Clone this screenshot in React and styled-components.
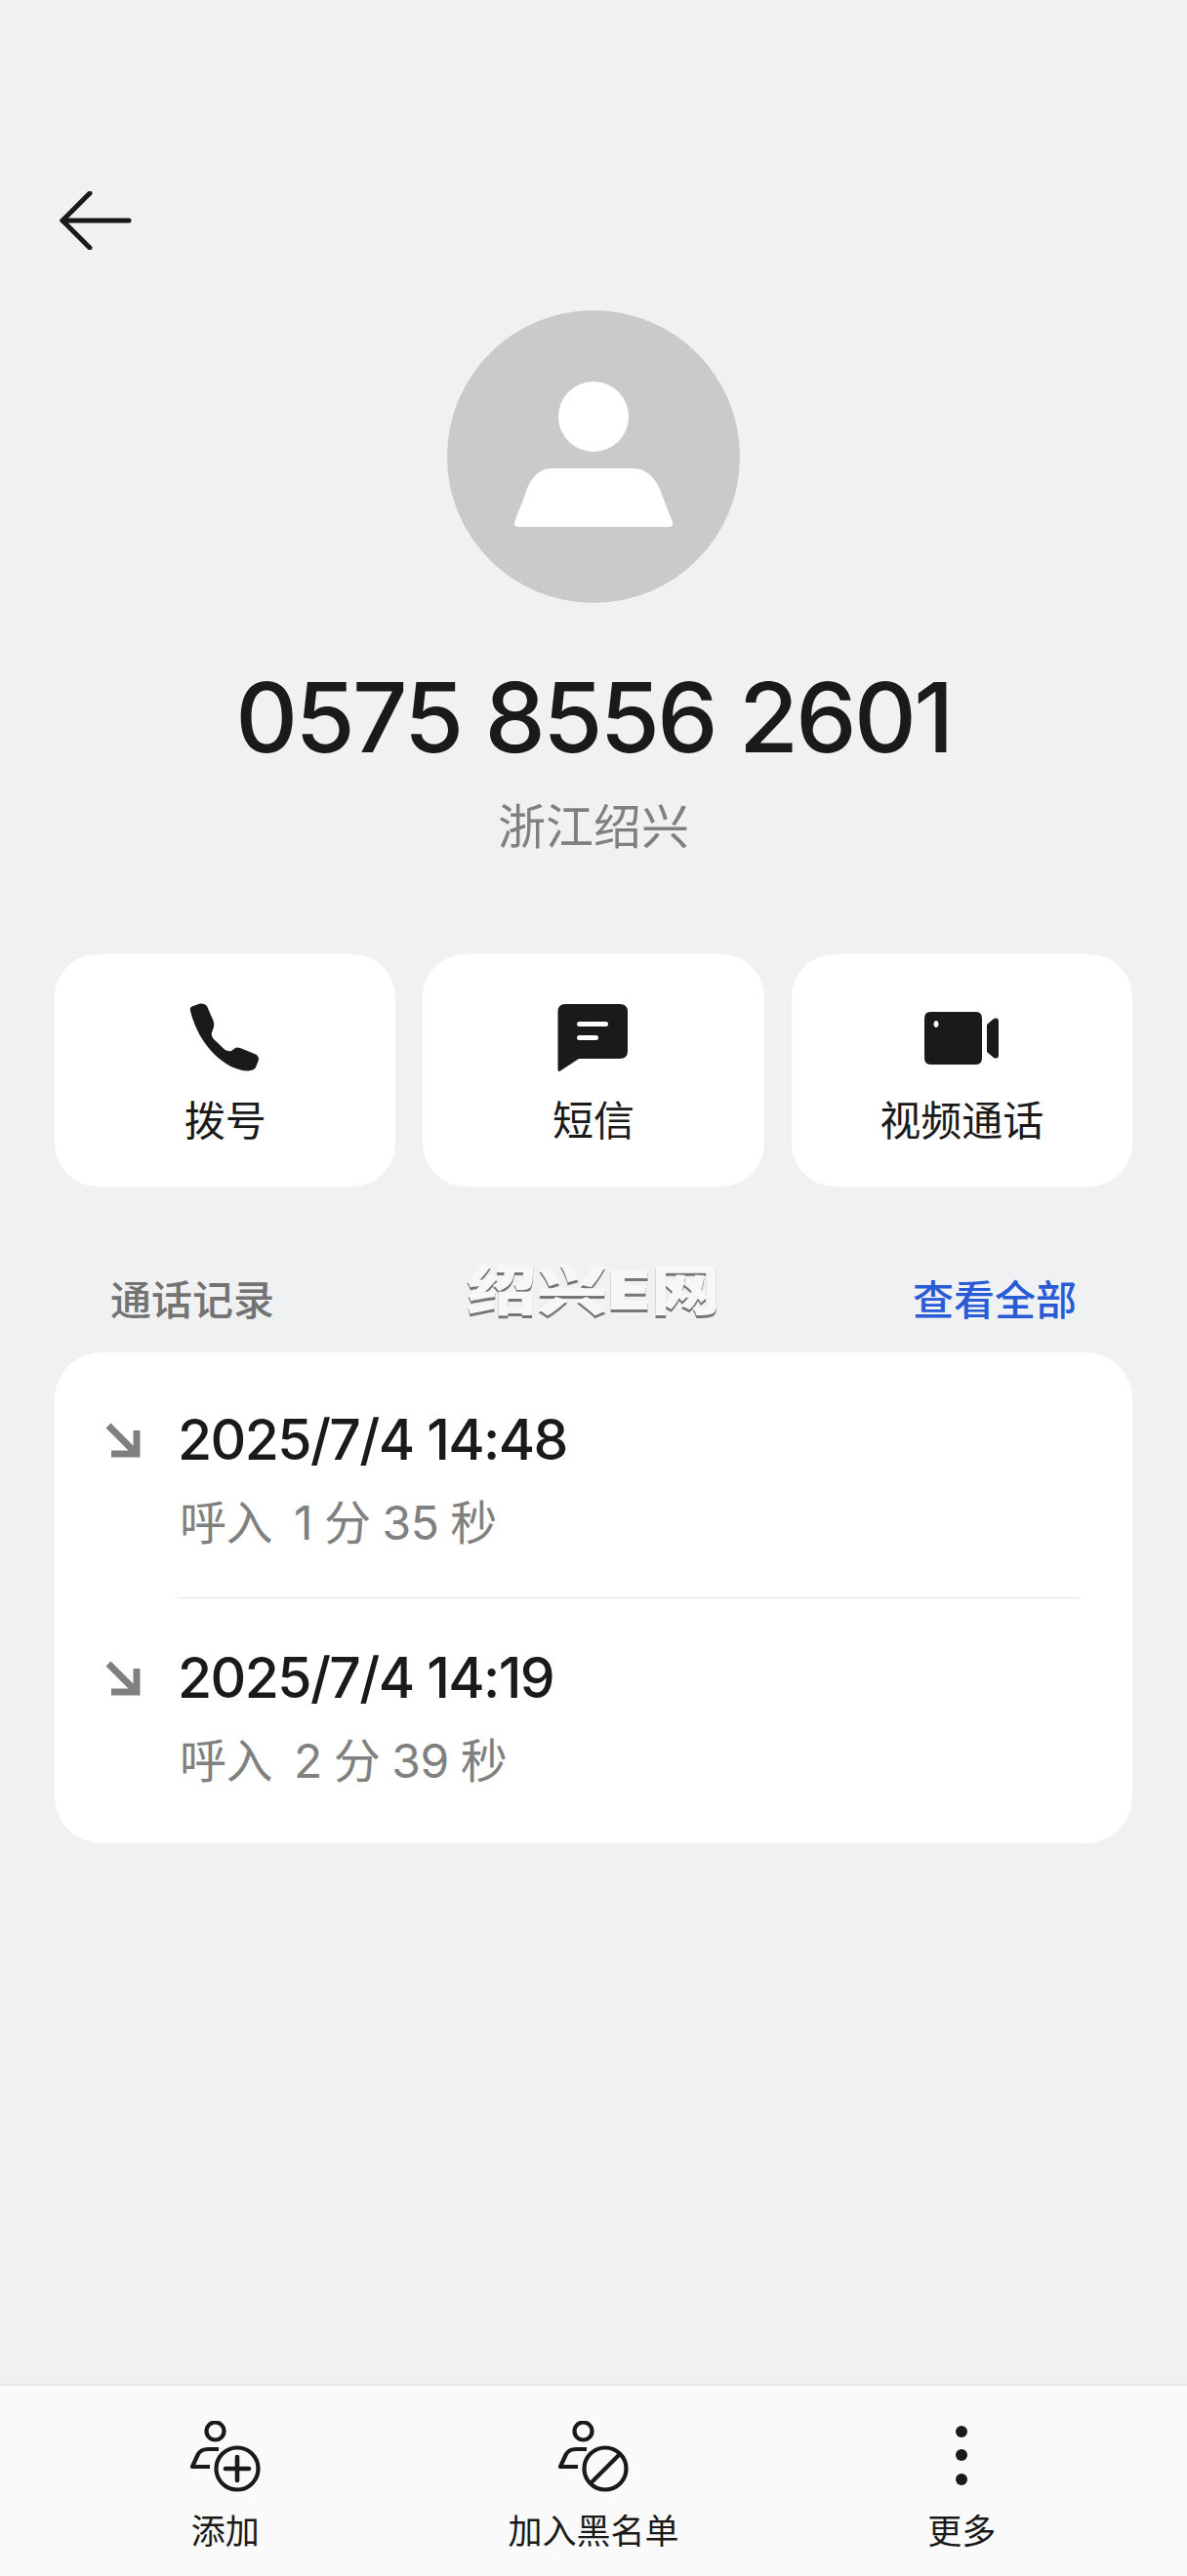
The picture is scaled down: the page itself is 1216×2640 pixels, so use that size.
import React from 'react';
import styled, { createGlobalStyle } from 'styled-components';

const GlobalStyle = createGlobalStyle`
  html, body {
    margin: 0;
    padding: 0;
    background: #f0f1f3;
    font-family: Inter, "Noto Sans CJK SC", sans-serif;
    color: #1a1a1a;
  }
`

const ACTIONS = [
  { label: '拨号', icon: <PhoneIcon /> },
  { label: '短信', icon: <MessageIcon /> },
  { label: '视频通话', icon: <VideoIcon /> },
]

const CALLS = [
  { time: '2025/7/4 14:48', type: '呼入', duration: '1 分 35 秒' },
  { time: '2025/7/4 14:19', type: '呼入', duration: '2 分 39 秒' },
]

const TOOLS = [
  { label: '添加', icon: <AddContactIcon /> },
  { label: '加入黑名单', icon: <BlockContactIcon /> },
  { label: '更多', icon: <MoreIcon /> },
]

function BackIcon() {
  return (
    <svg width="74" height="60" viewBox="0 0 74 60" fill="none" stroke="#1a1a1a" strokeWidth="5" strokeLinecap="round" strokeLinejoin="round">
      <path d="M31 2 L3 30 L31 58" />
      <path d="M3 30 H71" />
    </svg>
  )
}

function AvatarIcon() {
  return (
    <svg width="300" height="300" viewBox="0 0 300 300" fill="#fff">
      <circle cx="150" cy="109" r="36" />
      <path d="M108 162 H190 C206 162 216 175 220 189 L231 217 Q232 222 227 222 H73 Q68 222 69 217 L80 189 C84 175 92 162 108 162 Z" />
    </svg>
  )
}

function PhoneIcon() {
  return (
    <svg width="74" height="72" viewBox="0 0 74 72" fill="#1a1a1a">
      <path d="M1 8 Q0 4 4 3 L11 0.5 Q16 0 18 3 L24.5 18 Q26 22 24.5 26 L23 30 Q22 33 24.5 36.5 L36 47.5 Q39 50 43 49 L47 46 Q49 45 52 46 L68 52.5 Q71 54 71 58 L68 66 Q66 69 60 69.5 C38 69 10 45 1 8 Z" />
    </svg>
  )
}

function MessageIcon() {
  return (
    <svg width="74" height="70" viewBox="0 0 74 70" fill="#1a1a1a">
      <path fillRule="evenodd" d="M8 0 H64 Q72 0 72 8 V48 Q72 56 64 56 H22 L3 68.5 Q0.5 70 0.5 67 V8 Q0.5 0 8 0 Z M22.5 18 Q20 18 20 20.5 Q20 23 22.5 23 H49.5 Q52 23 52 20.5 Q52 18 49.5 18 Z M22.5 32 Q20 32 20 34.5 Q20 37 22.5 37 H39.5 Q42 37 42 34.5 Q42 32 39.5 32 Z" />
    </svg>
  )
}

function VideoIcon() {
  return (
    <svg width="78" height="56" viewBox="0 0 78 56" fill="#1a1a1a">
      <path fillRule="evenodd" d="M7 1 H54 Q60 1 60 8 V48 Q60 55 54 55 H7 Q1 55 1 48 V8 Q1 1 7 1 Z M13 10 A2.5 3.5 0 1 0 13.01 10 Z" />
      <path d="M65 14 L72 8 Q77 6 77 11 V45 Q77 50 72 48 L65 42 Z" />
    </svg>
  )
}

function AddContactIcon() {
  return (
    <svg width="76" height="74" viewBox="0 0 76 74" fill="none" stroke="#1a1a1a" strokeWidth="4.2" strokeLinejoin="round">
      <circle cx="27.5" cy="10.5" r="9" />
      <path d="M31 29 H20 Q13 29 10 34 L4 47 H22" />
      <circle cx="50" cy="49" r="21.5" />
      <path d="M50 37 V61 M38 49 H62" strokeLinecap="round" strokeWidth="4.6" />
    </svg>
  )
}

function BlockContactIcon() {
  return (
    <svg width="76" height="74" viewBox="0 0 76 74" fill="none" stroke="#1a1a1a" strokeWidth="4.2" strokeLinejoin="round">
      <circle cx="27.5" cy="10.5" r="9" />
      <path d="M31 29 H20 Q13 29 10 34 L4 47 H22" />
      <circle cx="50" cy="49" r="21.5" />
      <path d="M35 64 L65 34" />
    </svg>
  )
}

function MoreIcon() {
  return (
    <svg width="14" height="74" viewBox="0 0 14 74" fill="#1a1a1a">
      <circle cx="7" cy="11" r="6" />
      <circle cx="7" cy="35" r="6" />
      <circle cx="7" cy="60" r="6" />
    </svg>
  )
}

function IncomingIcon() {
  return (
    <svg width="36" height="36" viewBox="0 0 36 36" fill="none" stroke="#808080" strokeWidth="7">
      <path d="M3 3 L31 31" />
      <path d="M32 8 V32 H6" />
    </svg>
  )
}

export default function App() {
  return (
    <Page>
      <GlobalStyle />
      <BackButton><BackIcon /></BackButton>
      <Profile>
        <Avatar><AvatarIcon /></Avatar>
        <PhoneNumber>0575 8556 2601</PhoneNumber>
        <Region>浙江绍兴</Region>
      </Profile>
      <Actions>
        {ACTIONS.map((a) => (
          <ActionCard key={a.label}>
            <ActionIcon>{a.icon}</ActionIcon>
            <ActionLabel>{a.label}</ActionLabel>
          </ActionCard>
        ))}
      </Actions>
      <SectionHeader>
        <SectionTitle>通话记录</SectionTitle>
        <Watermark>绍兴E网</Watermark>
        <SeeAll>查看全部</SeeAll>
      </SectionHeader>
      <CallList>
        {CALLS.map((c, i) => (
          <CallRow key={c.time} $first={i == 0}>
            <CallArrow><IncomingIcon /></CallArrow>
            <CallBody $last={i == CALLS.length - 1}>
              <CallTime>{c.time}</CallTime>
              <CallDetail>
                <span>{c.type}</span>
                <span>{c.duration}</span>
              </CallDetail>
            </CallBody>
          </CallRow>
        ))}
      </CallList>
      <BottomBar>
        {TOOLS.map((t) => (
          <Tool key={t.label}>
            <ToolIcon>{t.icon}</ToolIcon>
            <ToolLabel>{t.label}</ToolLabel>
          </Tool>
        ))}
      </BottomBar>
    </Page>
  )
}

let Page = styled.div`
  width: 1216px;
  height: 2640px;
  display: flex;
  flex-direction: column;
  background: #f0f1f3;
  overflow: hidden;
`

let BackButton = styled.div`
  height: 60px;
  margin: 196px 0 0 61px;
`

let Profile = styled.div`
  display: flex;
  flex-direction: column;
  align-items: center;
  margin-top: 62px;
`

let Avatar = styled.div`
  width: 300px;
  height: 300px;
  border-radius: 50%;
  background: #c9cacc;
`

let PhoneNumber = styled.div`
  margin-top: 54px;
  font-size: 99px;
  line-height: 126px;
  font-weight: 500;
  letter-spacing: -2.6px;
  color: #1a1a1a;
  white-space: nowrap;
`

let Region = styled.div`
  margin-top: 18px;
  font-size: 49px;
  line-height: 64px;
  color: #808080;
`

let Actions = styled.div`
  display: grid;
  grid-template-columns: repeat(3, 1fr);
  gap: 28px;
  margin: 98px 56px 0;
`

let ActionCard = styled.div`
  height: 238px;
  border-radius: 44px;
  background: #fff;
  display: flex;
  flex-direction: column;
  align-items: center;
`

let ActionIcon = styled.div`
  height: 76px;
  margin-top: 48px;
  display: flex;
  align-items: center;
`

let ActionLabel = styled.div`
  margin-top: 19px;
  font-size: 42px;
  line-height: 56px;
  color: #1a1a1a;
`

let SectionHeader = styled.div`
  display: grid;
  grid-template-columns: 1fr auto 1fr;
  grid-template-rows: 60px;
  align-items: center;
  margin: 83px 57px 0;
  padding: 0 56px;
`

let SectionTitle = styled.div`
  font-size: 42px;
  font-weight: 500;
  color: #737373;
`

let Watermark = styled.div`
  font-size: 56px;
  line-height: 60px;
  font-weight: 900;
  color: #f6f7f8;
  text-shadow: 0 3px 0 #777;
  transform: translateY(-7px) scaleX(1.29);
`

let SeeAll = styled.div`
  justify-self: end;
  font-size: 42px;
  font-weight: 500;
  color: #2a5bd7;
`

let CallList = styled.div`
  margin: 27px 56px 0;
  height: 503px;
  border-radius: 48px;
  background: #fff;
`

let CallRow = styled.div`
  display: flex;
  padding-top: ${(p) => (p.$first ? '56px' : '48px')};
`

let CallArrow = styled.div`
  width: 126px;
  padding: 16px 0 0 52px;
  box-sizing: border-box;
`

let CallBody = styled.div`
  flex: 1;
  margin-right: 55px;
  height: ${(p) => (p.$last ? 'auto' : '195px')};
  border-bottom: ${(p) => (p.$last ? 'none' : '1px solid #e2e3e5')};
`

let CallTime = styled.div`
  font-size: 57px;
  line-height: 68px;
  font-weight: 500;
  letter-spacing: -1.6px;
  color: #1a1a1a;
`

let CallDetail = styled.div`
  display: flex;
  gap: 22px;
  margin-top: 19px;
  font-size: 48px;
  line-height: 64px;
  letter-spacing: -0.5px;
  word-spacing: -1px;
  color: #808080;
  padding-left: 2px;
`

let BottomBar = styled.div`
  margin-top: auto;
  height: 195px;
  display: grid;
  grid-template-columns: repeat(3, 1fr);
  gap: 28px;
  padding: 0 56px;
  background: #fafafa;
  border-top: 2px solid #e3e4e5;
`

let Tool = styled.div`
  display: flex;
  flex-direction: column;
  align-items: center;
`

let ToolIcon = styled.div`
  height: 74px;
  margin-top: 36px;
`

let ToolLabel = styled.div`
  margin-top: 15px;
  font-size: 35px;
  line-height: 48px;
  color: #1a1a1a;
`
